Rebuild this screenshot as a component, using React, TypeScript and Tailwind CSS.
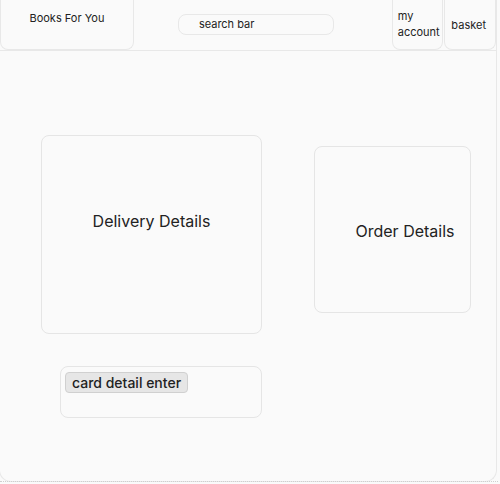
import React from "react";

export default function App() {
  return (
    <div className="w-[500px] h-[484px] bg-[#fafafa] relative overflow-hidden" style={{ fontFamily: "Inter, 'Noto Sans', sans-serif" }}>
      <div className="w-[498px] h-[482px] -ml-px border border-t-0 border-[#e8e8e8] rounded-b-xl bg-[#fafafa] flex flex-col">
        <div className="h-[51px] border-b border-[#e8e8e8] flex items-start shrink-0">
          <div className="w-[135px] h-[50px] border-x border-b border-[#e8e8e8] rounded-b-lg flex justify-center pt-[10px] text-[11px] text-[#222]">
            Books For You
          </div>
          <div className="ml-[44px] mt-[14px] w-[157px] h-[21px] border border-[#e8e8e8] rounded-[8px] pl-[20px] text-[11px] leading-[19px] text-[#222]">
            search bar
          </div>
          <div className="ml-[58px] w-[52px] h-[50px] border-x border-b border-[#e8e8e8] rounded-b-lg pl-[5px] pt-[8px] text-[11px] leading-[16px] text-[#222]">
            my<br />account
          </div>
          <div className="ml-px w-[52px] h-[50px] border-x border-b border-[#e8e8e8] rounded-b-lg pl-[6px] pt-[17px] text-[11px] leading-[16px] text-[#222]">
            basket
          </div>
        </div>
        <div className="flex items-start">
          <div className="ml-[41px] mt-[84px] w-[221px] h-[199px] border border-[#e5e5e5] rounded-lg flex items-center justify-center pb-[28px] text-[16px] text-[#222]">
            Delivery Details
          </div>
          <div className="ml-[52px] mt-[95px] w-[157px] h-[167px] border border-[#e5e5e5] rounded-lg flex items-center justify-center pl-[25px] pt-[2px] text-[16px] text-[#222]">
            Order Details
          </div>
        </div>
        <div className="ml-[60px] mt-[32px] w-[202px] h-[52px] border border-[#e5e5e5] rounded-lg pl-[4px] pt-[5px] flex items-start">
          <div className="border border-[#d0d0d0] bg-[#e6e6e6] rounded-[4px] px-[6px] text-[14px] font-medium leading-[19px] text-[#222]">
            card detail enter
          </div>
        </div>
      </div>
      <div className="absolute left-0 top-[481px] w-[498px] border-t border-dotted border-[#cfcfcf]" />
    </div>
  );
}
